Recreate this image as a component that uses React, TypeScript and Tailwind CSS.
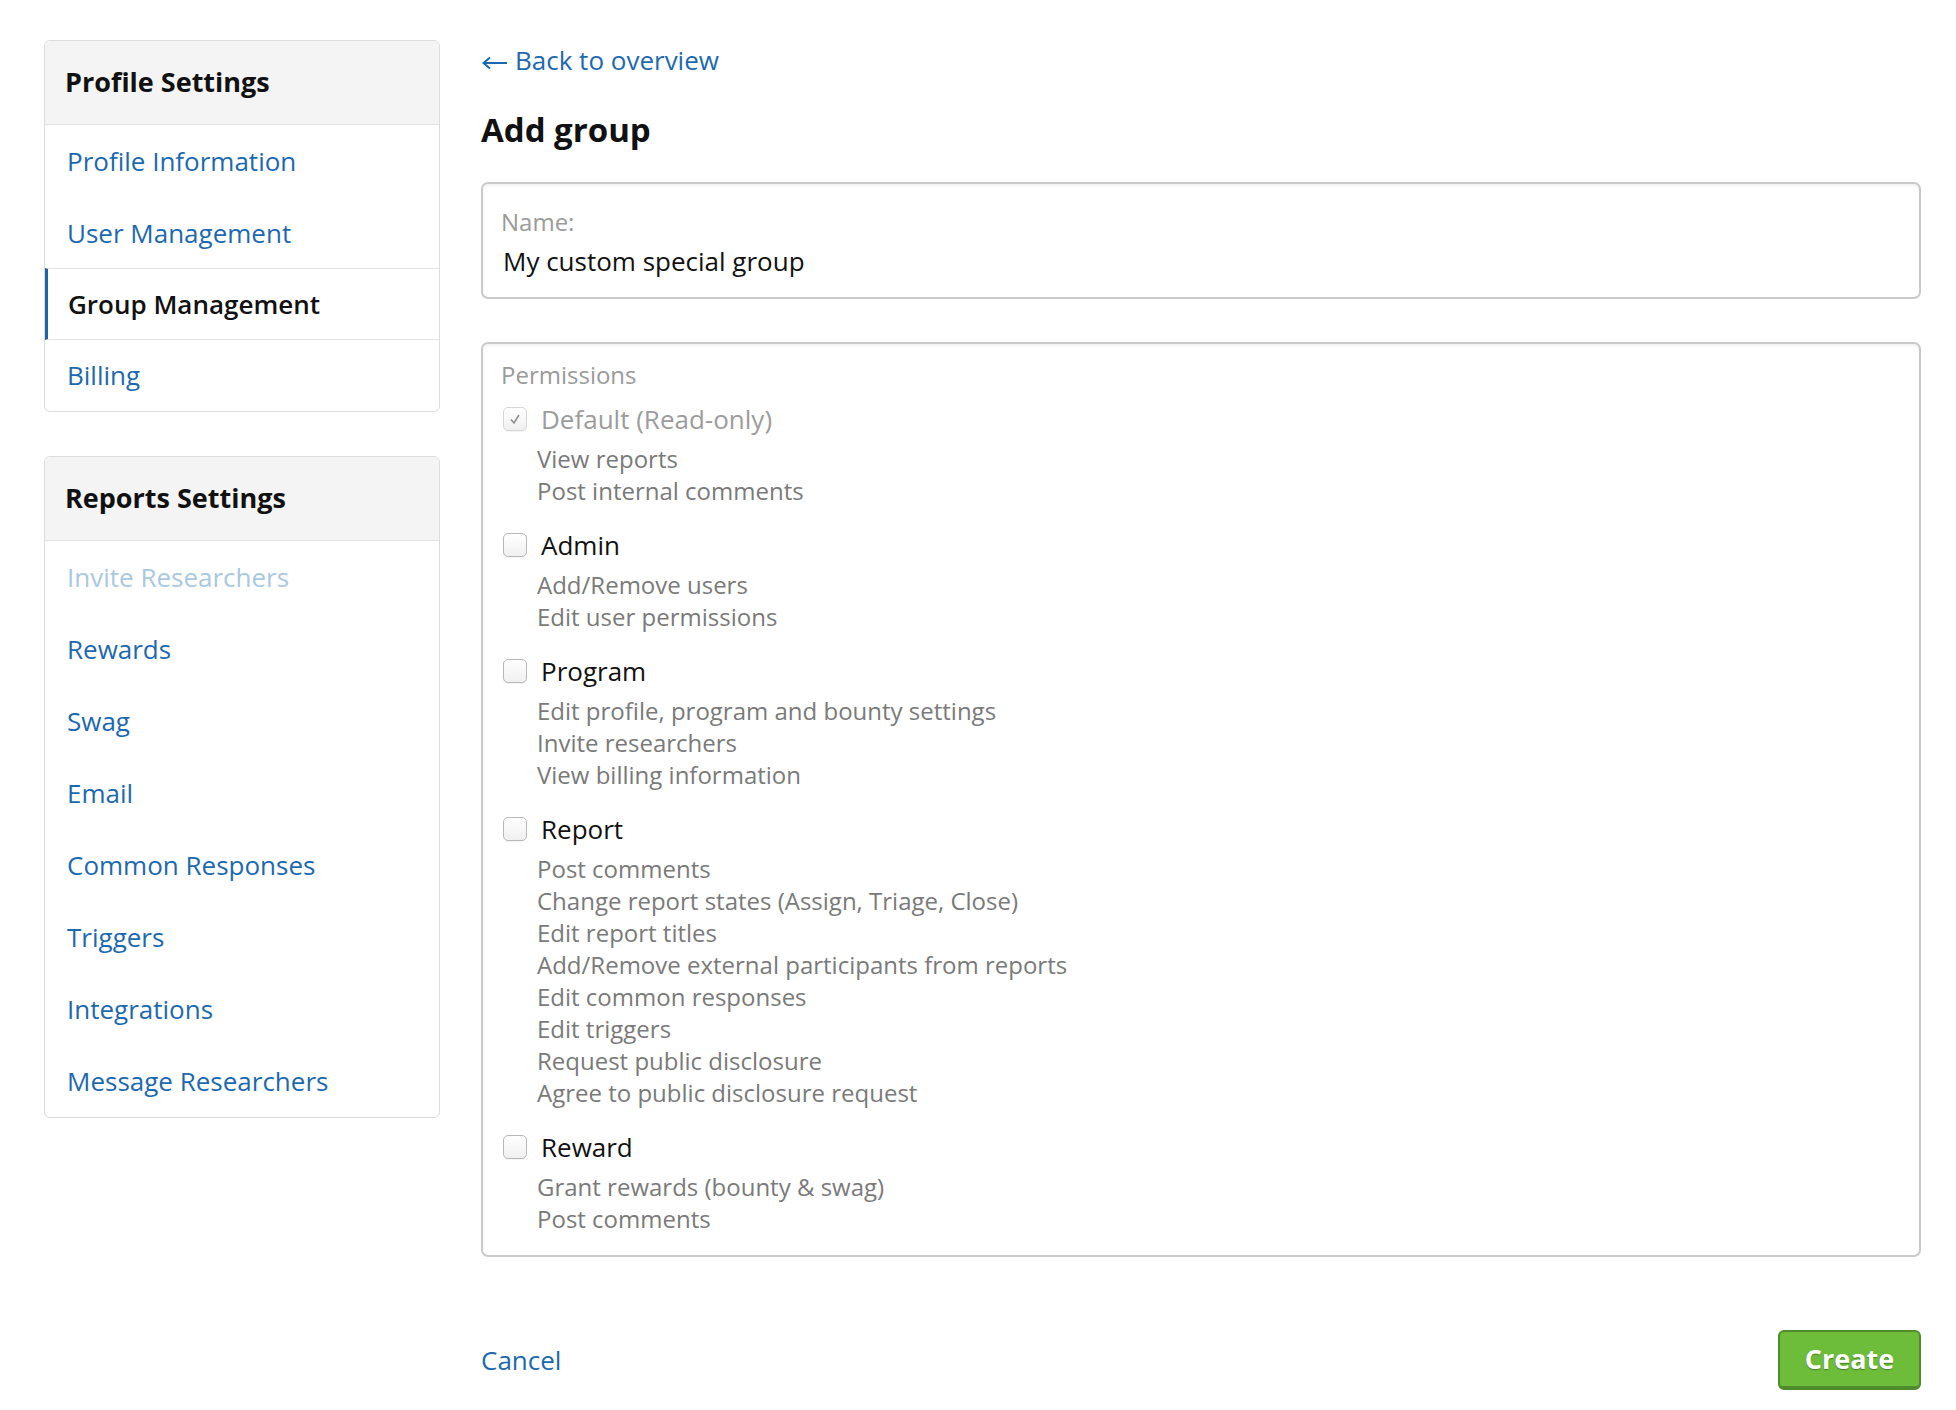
import React from "react";

const font = { fontFamily: '"Open Sans", "Noto Sans", sans-serif' };

function SideCard({ title, items }: { title: string; items: { label: string; active?: boolean; disabled?: boolean }[] }) {
  return (
    <div className="rounded-[6px] border border-[#dcdcdc] bg-white overflow-hidden">
      <div className="h-[84px] flex items-center px-[20px] bg-[#f4f4f4] border-b border-[#e2e2e2] text-[27px] font-bold text-[#111]">
        {title}
      </div>
      {items.map((it) => (
        <div
          key={it.label}
          className={
            it.active
              ? "h-[72px] flex items-center pl-[20px] border-l-[3px] border-l-[#1e63a6] border-y border-y-[#e4e4e4] text-[26px] font-semibold text-[#111] -my-px relative"
              : "h-[72px] flex items-center pl-[22px] text-[26px] " + (it.disabled ? "text-[#a9c8e3]" : "text-[#1d69b0]")
          }
        >
          {it.label}
        </div>
      ))}
    </div>
  );
}

function Check({ checked }: { checked?: boolean }) {
  return (
    <div
      className={
        "w-[24px] h-[24px] rounded-[5px] border flex items-center justify-center bg-gradient-to-b from-white to-[#f0f0f0] shadow-[0_1px_1px_rgba(0,0,0,0.05)] " +
        (checked ? "border-[#d6d6d6]" : "border-[#b8b8b8]")
      }
    >
      {checked && (
        <svg width="16" height="16" viewBox="0 0 16 16">
          <path d="M4 8.5 L7 12 L12 4" fill="none" stroke="#8f8f8f" strokeWidth="1.6" />
        </svg>
      )}
    </div>
  );
}

function Perm({ label, subs, checked, disabled }: { label: string; subs: string[]; checked?: boolean; disabled?: boolean }) {
  return (
    <div>
      <div className="flex items-center h-[36px]">
        <div className="ml-[5px]">
          <Check checked={checked} />
        </div>
        <span className={"ml-[14px] text-[26px] " + (disabled ? "text-[#9c9c9c]" : "text-[#111]")}>{label}</span>
      </div>
      <div className="mt-[6px] pl-[39px]">
        {subs.map((s, i) => (
          <div key={i} className="h-[32px] leading-[32px] text-[24px] text-[#7a7a7a]">
            {s}
          </div>
        ))}
      </div>
    </div>
  );
}

export default function App() {
  return (
    <div style={font} className="min-h-[1410px] w-[1956px] bg-white flex pl-[44px] pt-[40px]">
      <div className="w-[396px] shrink-0 flex flex-col gap-[44px]">
        <SideCard
          title="Profile Settings"
          items={[
            { label: "Profile Information" },
            { label: "User Management" },
            { label: "Group Management", active: true },
            { label: "Billing" },
          ]}
        />
        <SideCard
          title="Reports Settings"
          items={[
            { label: "Invite Researchers", disabled: true },
            { label: "Rewards" },
            { label: "Swag" },
            { label: "Email" },
            { label: "Common Responses" },
            { label: "Triggers" },
            { label: "Integrations" },
            { label: "Message Researchers" },
          ]}
        />
      </div>
      <div className="ml-[41px] w-[1440px] flex flex-col">
        <div className="h-[40px] leading-[40px] text-[26px] text-[#1d69b0] flex items-center">
          <svg width="26" height="14" viewBox="0 0 26 14" className="mt-[5px] mr-[7px] ml-[1px]">
            <path d="M25 7 H2 M8 1.5 L1.5 7 L8 12.5" fill="none" stroke="#1d69b0" strokeWidth="2" />
          </svg>
          <span>Back to overview</span>
        </div>
        <div className="mt-[30px] h-[40px] leading-[40px] text-[33px] font-bold text-[#111]">Add group</div>
        <div className="mt-[32px] h-[117px] rounded-[7px] border-2 border-[#cacaca] shadow-[inset_0_2px_3px_rgba(0,0,0,0.06)] pl-[18px] pr-[15px] pt-[24px]">
          <div className="h-[28px] leading-[28px] text-[24px] text-[#9a9a9a]">Name:</div>
          <div className="mt-[9px] h-[32px] leading-[32px] text-[26px] text-[#111] pl-[2px]">My custom special group</div>
        </div>
        <div className="mt-[43px] h-[915px] rounded-[7px] border-2 border-[#cacaca] shadow-[inset_0_2px_3px_rgba(0,0,0,0.06)] px-[15px] pt-[17px]">
          <div className="h-[28px] leading-[28px] text-[24px] text-[#9a9a9a] pl-[3px]">Permissions</div>
          <div className="mt-[12px] flex flex-col gap-[20px]">
            <Perm label="Default (Read-only)" checked disabled subs={["View reports", "Post internal comments"]} />
            <Perm label="Admin" subs={["Add/Remove users", "Edit user permissions"]} />
            <Perm label="Program" subs={["Edit profile, program and bounty settings", "Invite researchers", "View billing information"]} />
            <Perm
              label="Report"
              subs={[
                "Post comments",
                "Change report states (Assign, Triage, Close)",
                "Edit report titles",
                "Add/Remove external participants from reports",
                "Edit common responses",
                "Edit triggers",
                "Request public disclosure",
                "Agree to public disclosure request",
              ]}
            />
            <Perm label="Reward" subs={["Grant rewards (bounty & swag)", "Post comments"]} />
          </div>
        </div>
        <div className="mt-[73px] flex items-center justify-between">
          <span className="text-[26px] text-[#1d69b0]">Cancel</span>
          <button className="w-[143px] h-[60px] rounded-[6px] bg-[#6dbd3a] border-2 border-[#4f8c2b] border-b-[4px] text-white text-[27px] font-bold [text-shadow:0_1px_1px_rgba(0,0,0,0.35)]">
            Create
          </button>
        </div>
      </div>
    </div>
  );
}
